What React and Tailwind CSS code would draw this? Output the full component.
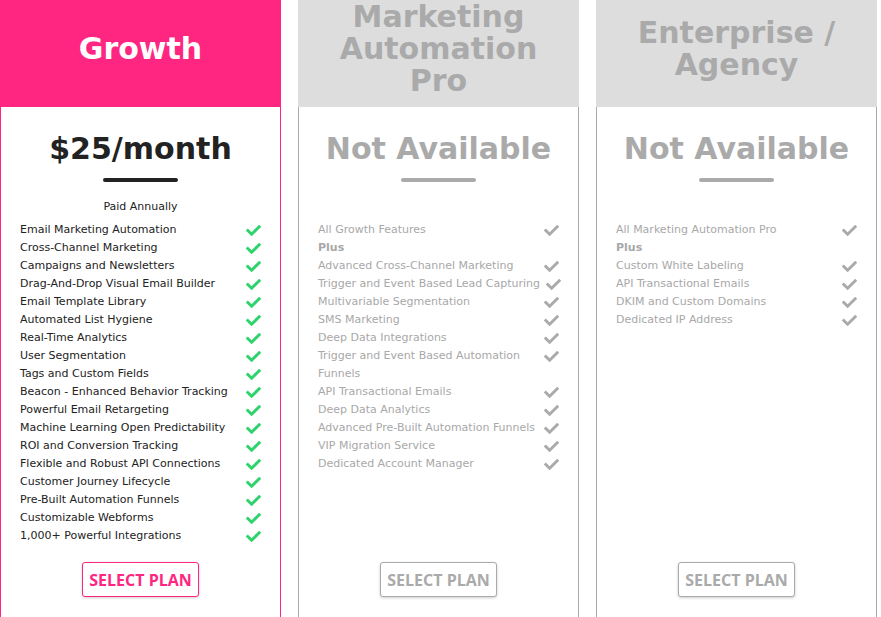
import React from "react";
import { FaCheck } from "react-icons/fa";

const growth = [
  "Email Marketing Automation",
  "Cross-Channel Marketing",
  "Campaigns and Newsletters",
  "Drag-And-Drop Visual Email Builder",
  "Email Template Library",
  "Automated List Hygiene",
  "Real-Time Analytics",
  "User Segmentation",
  "Tags and Custom Fields",
  "Beacon - Enhanced Behavior Tracking",
  "Powerful Email Retargeting",
  "Machine Learning Open Predictability",
  "ROI and Conversion Tracking",
  "Flexible and Robust API Connections",
  "Customer Journey Lifecycle",
  "Pre-Built Automation Funnels",
  "Customizable Webforms",
  "1,000+ Powerful Integrations",
];

const pro = [
  { t: "All Growth Features" },
  { t: "Plus", plus: true },
  { t: "Advanced Cross-Channel Marketing" },
  { t: "Trigger and Event Based Lead Capturing" },
  { t: "Multivariable Segmentation" },
  { t: "SMS Marketing" },
  { t: "Deep Data Integrations" },
  { t: "Trigger and Event Based Automation", t2: "Funnels" },
  { t: "API Transactional Emails" },
  { t: "Deep Data Analytics" },
  { t: "Advanced Pre-Built Automation Funnels" },
  { t: "VIP Migration Service" },
  { t: "Dedicated Account Manager" },
];

const ent = [
  { t: "All Marketing Automation Pro" },
  { t: "Plus", plus: true },
  { t: "Custom White Labeling" },
  { t: "API Transactional Emails" },
  { t: "DKIM and Custom Domains" },
  { t: "Dedicated IP Address" },
];

const font = { fontFamily: '"DejaVu Sans", "Noto Sans", sans-serif' };

function Row({ item, active }) {
  return (
    <div className="flex items-start gap-[6px]">
      <div className={`flex-1 whitespace-nowrap text-[11px] leading-[18px] ${active ? "text-[#222]" : "text-[#a8a8a8]"} ${item.plus ? "font-bold" : ""}`}>
        {item.t}
        {item.t2 && (
          <>
            <br />
            {item.t2}
          </>
        )}
      </div>
      {!item.plus && (
        <div className="h-[18px] w-[15px] flex items-center justify-center">
          <FaCheck className={active ? "text-[#2fd36b]" : "text-[#aaaaaa]"} size={15} />
        </div>
      )}
    </div>
  );
}

function Column({ title, price, active, items, paid }) {
  return (
    <div className="w-[281px] flex flex-col shrink-0">
      <div
        className={`h-[107px] shrink-0 flex items-center justify-center pb-[10px] px-[20px] text-center text-[30px] leading-[32px] font-bold ${
          active ? "bg-[#ff2681] text-white" : "bg-[#dddddd] text-[#aaaaaa]"
        }`}
      >
        <div>{title}</div>
      </div>
      <div
        className={`h-[540px] shrink-0 border-x border-b flex flex-col items-stretch ${
          active ? "border-[#ff2681]" : "border-[#aaaaaa]"
        }`}
      >
        <div
          className={`pt-[24px] shrink-0 text-center text-[30px] leading-[36px] font-bold ${
            active ? "text-[#222]" : "text-[#aaaaaa]"
          }`}
        >
          {price}
        </div>
        <div
          className={`mt-[11px] shrink-0 mx-auto h-[4px] w-[75px] rounded-full ${
            active ? "bg-[#222]" : "bg-[#aaaaaa]"
          }`}
        />
        <div className="mt-[16px] shrink-0 h-[18px] text-center text-[11px] leading-[18px] text-[#222]">
          {paid}
        </div>
        <div className="mt-[5px] shrink-0 h-[323px] px-[19px] flex flex-col">
          {items.map((it, i) => (
            <Row key={i} item={it} active={active} />
          ))}
        </div>
        <div className="mt-[18px] shrink-0 flex justify-center">
          <button
            className={`h-[35px] w-[117px] rounded-[3px] border bg-white text-[16px] font-bold shadow-[0_1px_3px_rgba(0,0,0,0.2)] ${
              active ? "border-[#ff2681] text-[#ff2681]" : "border-[#aaaaaa] text-[#aaaaaa]"
            }`}
            style={{ fontFamily: '"Open Sans", "Liberation Sans", sans-serif' }}
          >
            SELECT PLAN
          </button>
        </div>
      </div>
    </div>
  );
}

export default function App() {
  return (
    <div className="w-[881px] h-[617px] overflow-hidden bg-white flex items-start gap-[17px]" style={font}>
      <Column
        title="Growth"
        price="$25/month"
        active
        paid="Paid Annually"
        items={growth.map((t) => ({ t }))}
      />
      <Column title="Marketing Automation Pro" price="Not Available" items={pro} paid="" />
      <Column title="Enterprise / Agency" price="Not Available" items={ent} paid="" />
    </div>
  );
}
